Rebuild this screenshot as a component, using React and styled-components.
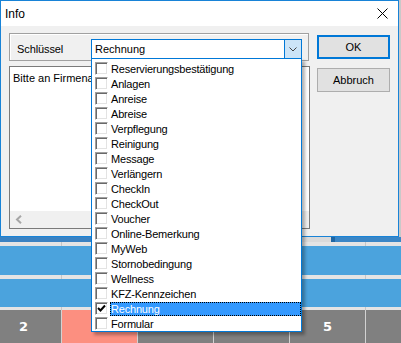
import React from "react";
import styled, { createGlobalStyle } from "styled-components";

const Global = createGlobalStyle`
  html, body { margin: 0; padding: 0; background: #d0d0d0; }
  body { font-family: "Liberation Sans", Arial, sans-serif; }
  #root { width: 401px; height: 343px; overflow: hidden; }
`;

const Screen = styled.div`
  width: 401px;
  height: 343px;
  display: flex;
  flex-direction: column;
  overflow: hidden;
  position: relative;
`;

const TopRow = styled.div`
  display: flex;
  height: 237px;
  flex: none;
`;

const RightStrip = styled.div`
  flex: 1;
  background: #c9c9c9;
`;

const Dialog = styled.div`
  width: 399px;
  height: 237px;
  box-sizing: border-box;
  border: 1px solid #1883d7;
  background: #f0f0f0;
  display: flex;
  flex-direction: column;
  position: relative;
  z-index: 2;
`;

const TitleBar = styled.div`
  height: 25px;
  background: #ffffff;
  display: flex;
  align-items: center;
  justify-content: space-between;
  padding: 0 10px 0 4px;
  font-size: 12px;
  color: #000;
`;

const Body = styled.div`
  flex: 1;
  display: flex;
  gap: 8px;
  padding: 7px 8px 7px 8px;
  font-size: 11px;
`;

const LeftCol = styled.div`
  width: 300px;
  display: flex;
  flex-direction: column;
  gap: 5px;
`;

const Panel = styled.div`
  height: 28px;
  box-sizing: border-box;
  border: 1px solid #a0a0a0;
  box-shadow: inset 1px 1px 0 #ffffff;
  display: flex;
  align-items: flex-start;
  padding: 5px 6px 0 7px;
`;

const Label = styled.div`
  width: 74px;
  height: 20px;
  display: flex;
  align-items: center;
  letter-spacing: -0.1px;
`;

const Combo = styled.div`
  position: relative;
  width: 211px;
  height: 20px;
  box-sizing: border-box;
  border: 1px solid #0078d7;
  background: #fff;
  display: flex;
  align-items: center;
`;

const ComboText = styled.div`
  flex: 1;
  padding-left: 3px;
`;

const ComboButton = styled.div`
  width: 16px;
  height: 100%;
  background: #cce4f7;
  border-left: 1px solid #0078d7;
  display: flex;
  align-items: center;
  justify-content: center;
`;

const Memo = styled.div`
  height: 163px;
  width: 301px;
  box-sizing: border-box;
  border: 1px solid #7a7a7a;
  background: #fff;
  display: flex;
  flex-direction: column;
`;

const MemoArea = styled.div`
  flex: 1;
  padding: 5px 3px;
`;

const MemoText = styled.div`
  width: 78px;
  white-space: nowrap;
  overflow: hidden;
`;

const HScroll = styled.div`
  height: 17px;
  background: #f0f0f0;
  display: flex;
  align-items: center;
  padding-left: 5px;
`;

const ButtonCol = styled.div`
  display: flex;
  flex-direction: column;
  gap: 9px;
  padding-top: 2px;
`;

const Button = styled.div`
  width: 73px;
  height: 24px;
  box-sizing: border-box;
  background: #e1e1e1;
  border: ${(p) => (p.$default ? "2px solid #0078d7" : "1px solid #adadad")};
  display: flex;
  align-items: center;
  justify-content: center;
  font-size: 11px;
`;

const DropList = styled.div`
  position: absolute;
  left: -1px;
  top: 18px;
  width: 211px;
  box-sizing: border-box;
  border: 1px solid #0078d7;
  background: #fff;
  padding: 2px 0 0 0;
  box-shadow: 3px 3px 3px rgba(0, 0, 0, 0.3);
  z-index: 5;
`;

const Item = styled.div`
  height: 15px;
  display: flex;
  align-items: center;
  padding-left: 3px;
`;

const Check = styled.div`
  width: 13px;
  height: 13px;
  box-sizing: border-box;
  flex: none;
  background: #fff;
  border-top: 1px solid #a0a0a0;
  border-left: 1px solid #a0a0a0;
  border-right: 1px solid #ffffff;
  border-bottom: 1px solid #ffffff;
  box-shadow: inset 1px 1px 0 #696969, inset -1px -1px 0 #e3e3e3;
  display: flex;
  align-items: center;
  justify-content: center;
`;

const ItemLabel = styled.div`
  margin-left: 2px;
  flex: 1;
  height: 14px;
  display: flex;
  align-items: center;
  padding-left: 1px;
  letter-spacing: -0.2px;
  white-space: nowrap;
  background: ${(p) => (p.$selected ? "#3399ff" : "transparent")};
  color: ${(p) => (p.$selected ? "#ffffff" : "#000000")};
  outline: ${(p) => (p.$selected ? "1px dotted #000" : "none")};
  outline-offset: -1px;
`;

const ShadowBand = styled.div`
  height: 5px;
  flex: none;
  display: flex;
`;

const BandPart = styled.div`
  width: ${(p) => p.$w};
  flex: ${(p) => (p.$grow ? 1 : "none")};
  background: ${(p) => p.$bg};
`;

const GridRow = styled.div`
  height: ${(p) => p.$h}px;
  flex: none;
  display: flex;
  gap: 1px;
  margin-left: -14px;
  background: ${(p) => p.$line};
`;

const Cell = styled.div`
  width: 75px;
  flex: none;
  background: ${(p) => p.$bg};
  display: flex;
  align-items: center;
  justify-content: center;
  color: #fff;
  font-weight: bold;
  font-size: 13px;
  font-family: "DejaVu Sans", "Liberation Sans", sans-serif;
`;

const BlueRow = styled.div`
  height: ${(p) => p.$h}px;
  flex: none;
  background: #4ba3dd;
`;

const items = [
  "Reservierungsbestätigung",
  "Anlagen",
  "Anreise",
  "Abreise",
  "Verpflegung",
  "Reinigung",
  "Message",
  "Verlängern",
  "CheckIn",
  "CheckOut",
  "Voucher",
  "Online-Bemerkung",
  "MyWeb",
  "Stornobedingung",
  "Wellness",
  "KFZ-Kennzeichen",
  "Rechnung",
  "Formular",
];

const Strip = ({ h }) => (
  <GridRow $h={h} $line="#c6c6c6">
    {Array.from({ length: 6 }).map((_, i) => (
      <Cell key={i} $bg="#e4e4e4" />
    ))}
  </GridRow>
);

export default function App() {
  return (
    <>
      <Global />
      <Screen>
        <TopRow>
          <Dialog>
            <TitleBar>
              <span>Info</span>
              <svg width="11" height="11" viewBox="0 0 11 11">
                <path d="M0.5 0.5 L10.5 10.5 M10.5 0.5 L0.5 10.5" stroke="#000" strokeWidth="1" />
              </svg>
            </TitleBar>
            <Body>
              <LeftCol>
                <Panel>
                  <Label>Schlüssel</Label>
                  <Combo>
                    <ComboText>Rechnung</ComboText>
                    <ComboButton>
                      <svg width="8" height="5" viewBox="0 0 8 5">
                        <polyline points="0.5,0.5 4,4 7.5,0.5" fill="none" stroke="#444" strokeWidth="1" />
                      </svg>
                    </ComboButton>
                    <DropList>
                      {items.map((t) => {
                        const sel = t === "Rechnung";
                        return (
                          <Item key={t}>
                            <Check>
                              {sel && (
                                <svg width="9" height="9" viewBox="0 0 9 9">
                                  <polyline points="1,4 3.5,6.5 8,1.5" fill="none" stroke="#000" strokeWidth="2" />
                                </svg>
                              )}
                            </Check>
                            <ItemLabel $selected={sel}>{t}</ItemLabel>
                          </Item>
                        );
                      })}
                    </DropList>
                  </Combo>
                </Panel>
                <Memo>
                  <MemoArea>
                    <MemoText>Bitte an Firmenanschrift</MemoText>
                  </MemoArea>
                  <HScroll>
                    <svg width="8" height="9" viewBox="0 0 8 9">
                      <polyline points="6,0.8 2,4.5 6,8.2" fill="none" stroke="#a6a6a6" strokeWidth="2" />
                    </svg>
                  </HScroll>
                </Memo>
              </LeftCol>
              <ButtonCol>
                <Button $default>OK</Button>
                <Button>Abbruch</Button>
              </ButtonCol>
            </Body>
          </Dialog>
          <RightStrip />
        </TopRow>
        <ShadowBand>
          <BandPart $w="200px" $bg="#3a82c2" />
          <BandPart $w="131px" $bg="#dadada" />
          <BandPart $w="4px" $bg="#1f66a3" />
          <BandPart $grow $bg="#3a86c6" />
        </ShadowBand>
        <Strip h={4} />
        <BlueRow $h={29} />
        <Strip h={4} />
        <BlueRow $h={28} />
        <Strip h={3} />
        <GridRow $h={33} $line="#d2d2d2">
          <Cell $bg="#808080">2</Cell>
          <Cell $bg="#fc8f80" />
          <Cell $bg="#808080">3</Cell>
          <Cell $bg="#808080">4</Cell>
          <Cell $bg="#808080">5</Cell>
          <Cell $bg="#808080" />
        </GridRow>
      </Screen>
    </>
  );
}
